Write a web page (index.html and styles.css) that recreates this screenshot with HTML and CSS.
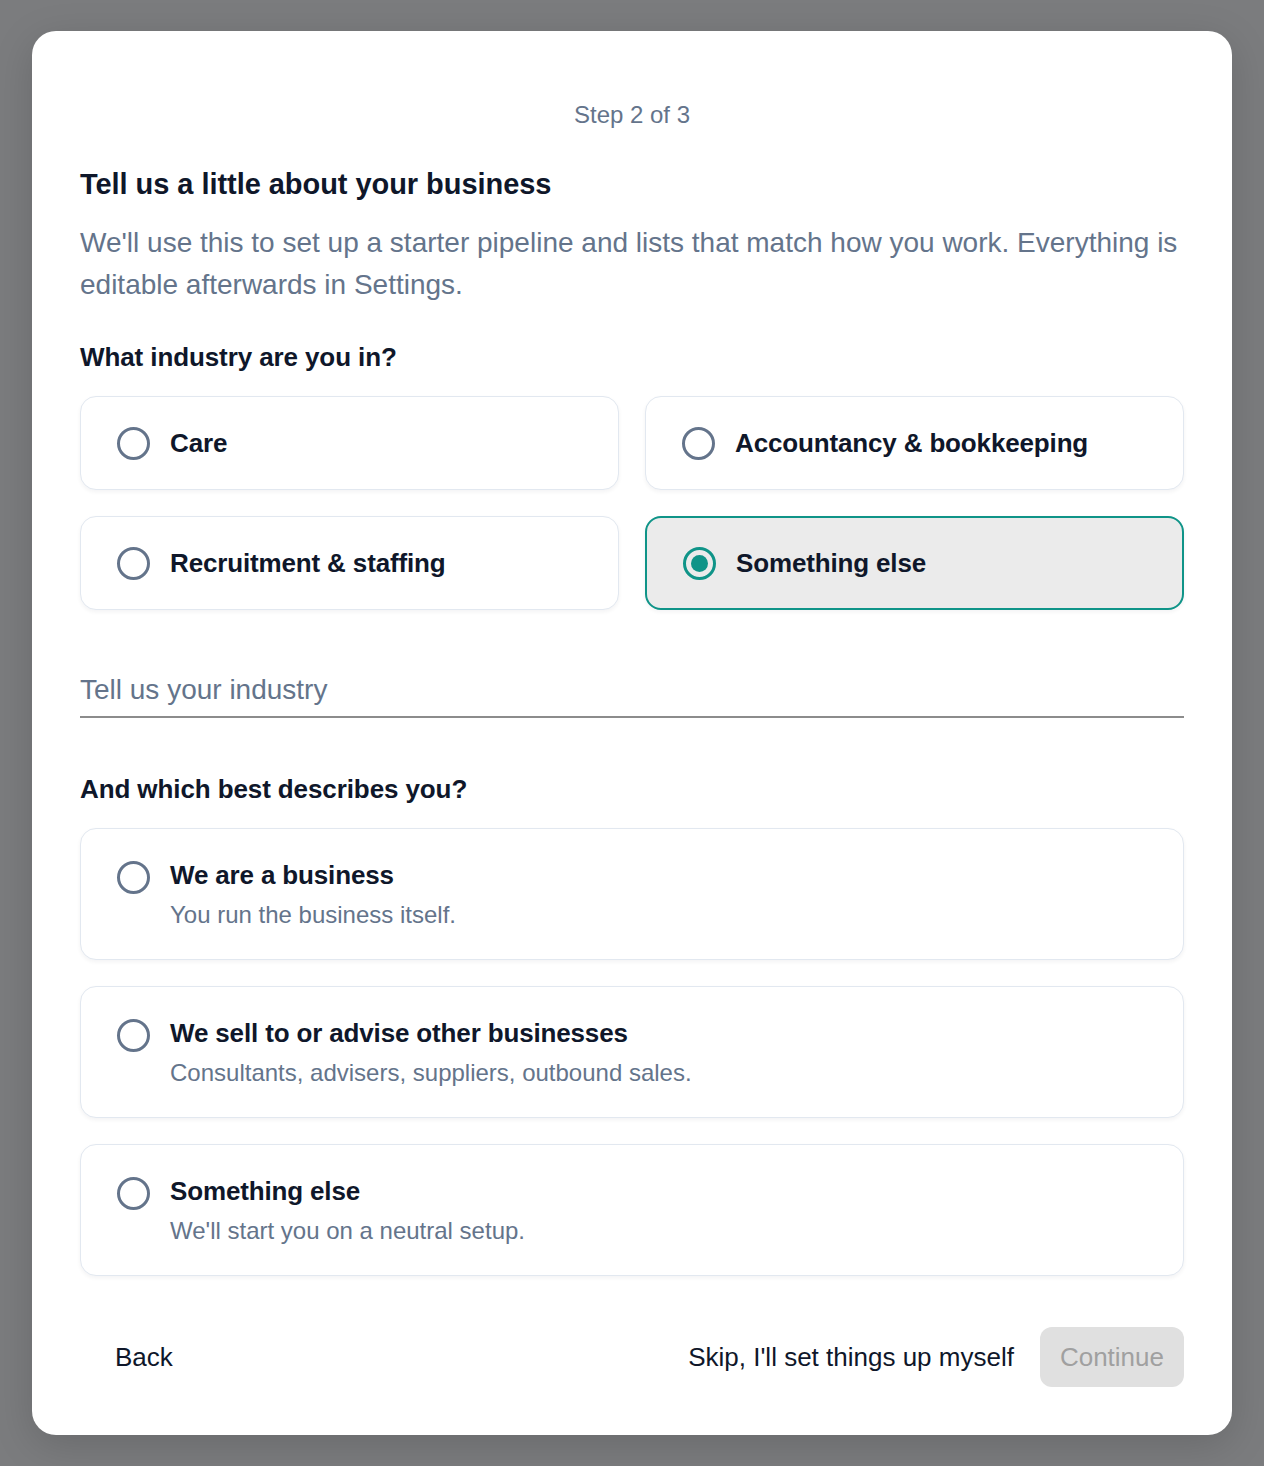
FILE: index.html
```html
<!DOCTYPE html>
<html lang="en">
<head>
<meta charset="utf-8">
<title>Step 2 of 3</title>
<link rel="stylesheet" href="styles.css">
</head>
<body>
<div class="overlay">
  <div class="modal">
    <div class="step">Step 2 of 3</div>
    <h1 class="title">Tell us a little about your business</h1>
    <p class="desc">We'll use this to set up a starter pipeline and lists that match how you work. Everything is editable afterwards in Settings.</p>

    <h2 class="question">What industry are you in?</h2>
    <div class="grid">
      <label class="card"><span class="radio"></span><span class="label">Care</span></label>
      <label class="card"><span class="radio"></span><span class="label">Accountancy &amp; bookkeeping</span></label>
      <label class="card"><span class="radio"></span><span class="label">Recruitment &amp; staffing</span></label>
      <label class="card selected"><span class="radio on"></span><span class="label">Something else</span></label>
    </div>

    <div class="field"><input class="input" type="text" placeholder="Tell us your industry"></div>

    <h2 class="question q2">And which best describes you?</h2>
    <div class="list">
      <label class="card tall"><span class="radio"></span><span class="texts"><span class="label">We are a business</span><span class="sub">You run the business itself.</span></span></label>
      <label class="card tall"><span class="radio"></span><span class="texts"><span class="label">We sell to or advise other businesses</span><span class="sub">Consultants, advisers, suppliers, outbound sales.</span></span></label>
      <label class="card tall"><span class="radio"></span><span class="texts"><span class="label">Something else</span><span class="sub">We'll start you on a neutral setup.</span></span></label>
    </div>

    <div class="footer">
      <button class="btn ghost">Back</button>
      <div class="right">
        <button class="btn ghost">Skip, I'll set things up myself</button>
        <button class="btn disabled" disabled>Continue</button>
      </div>
    </div>
  </div>
</div>
</body>
</html>
```
FILE: styles.css
```css
* { box-sizing: border-box; }
html, body { margin: 0; padding: 0; }
body {
  background: #7b7c7e;
  font-family: "Liberation Sans", Arial, sans-serif;
  color: #0f172a;
}
.overlay {
  padding: 31px 32px;
  min-height: 1466px;
}
.modal {
  background: #fff;
  border-radius: 24px;
  padding: 70px 48px 48px;
  height: 1404px;
  box-shadow: 0 10px 40px rgba(0,0,0,0.15);
  display: flex;
  flex-direction: column;
}
.step {
  text-align: center;
  font-size: 24px;
  color: #64748b;
  line-height: 28px;
}
.title {
  margin: 37px 0 0;
  font-size: 29px;
  font-weight: 700;
  line-height: 36px;
  letter-spacing: -0.05px;
}
.desc {
  margin: 20px 0 0;
  font-size: 28px;
  line-height: 42px;
  color: #64748b;
}
.question {
  margin: 35px 0 0;
  font-size: 26px;
  font-weight: 700;
  line-height: 32px;
  letter-spacing: -0.1px;
}
.grid {
  margin-top: 23px;
  display: grid;
  grid-template-columns: 1fr 1fr;
  gap: 26px;
}
.card {
  display: flex;
  align-items: center;
  gap: 20px;
  height: 94px;
  padding: 0 36px;
  border: 1.5px solid #e2e8f0;
  border-radius: 16px;
  background: #fff;
  box-shadow: 0 2px 4px rgba(15,23,42,0.05);
}
.card.selected {
  background: #ebebeb;
  border: 2px solid #0f9488;
}
.radio {
  flex: none;
  width: 33px;
  height: 33px;
  border: 3px solid #64748b;
  border-radius: 50%;
  display: flex;
  align-items: center;
  justify-content: center;
}
.radio.on { border-color: #0f9488; }
.radio.on::after {
  content: "";
  width: 17px;
  height: 17px;
  border-radius: 50%;
  background: #0f9488;
}
.label {
  font-size: 26px;
  font-weight: 700;
  line-height: 30px;
  letter-spacing: -0.15px;
  color: #0f172a;
}
.field { margin-top: 64px; }
.input {
  display: block;
  width: 100%;
  border: 0;
  border-bottom: 2px solid #8c8c8c;
  padding: 0 0 10px;
  font: inherit;
  font-size: 28px;
  line-height: 32px;
  height: 44px;
  background: transparent;
  outline: none;
}
.input::placeholder { color: #64748b; }
.q2 { margin-top: 55px; }
.list {
  margin-top: 23px;
  display: flex;
  flex-direction: column;
  gap: 26px;
}
.card.tall {
  height: 132px;
  align-items: flex-start;
  padding-top: 30.5px;
}
.card.tall .radio { margin-top: 1px; }
.texts { display: flex; flex-direction: column; gap: 11px; }
.sub { font-size: 24px; color: #64748b; line-height: 28px; }
.footer {
  margin-top: auto;
  display: flex;
  justify-content: space-between;
  align-items: center;
}
.right { display: flex; align-items: center; gap: 26px; }
.btn {
  font: inherit;
  font-size: 26px;
  border: 0;
  background: transparent;
  color: #0f172a;
  height: 60px;
  padding: 0 20px;
  border-radius: 12px;
}
.footer > .btn { padding: 0 35px; }
.right .ghost { padding: 0; }
.btn.disabled {
  background: #e0e0e0;
  color: #a0a0a0;
}
```
